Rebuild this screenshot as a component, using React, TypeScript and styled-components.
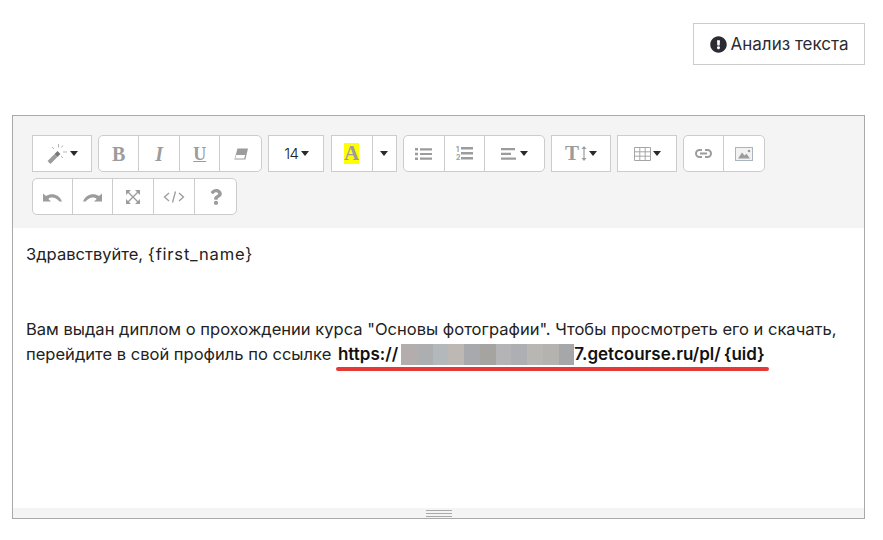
import { ReactNode } from 'react'
import { FaExclamationCircle, FaQuestion } from 'react-icons/fa'
import styled, { createGlobalStyle } from 'styled-components'

const GlobalStyle = createGlobalStyle`
  html, body {
    margin: 0;
    background: #fff;
    font-family: Inter, "Noto Sans", sans-serif;
    color: #222;
  }
`

const blurCells = ['#b3aeab', '#adaeb0', '#b3b8ba', '#bdb8b4', '#a8a9ac', '#a5a4a1', '#b4b4b6', '#aeafb2', '#b9b7b3', '#b5b3af', '#a6a7a8']

const Svg = ({ w, h, children }: { w: number; h: number; children: ReactNode }) => (
  <svg width={w} height={h} viewBox={`0 0 ${w} ${h}`} fill="#9c9c9c">
    {children}
  </svg>
)

const undoPath = 'M0 1.500V9.500H8L5.300 7C8 4.700 12.500 5 16.500 9.500H19C16 2.500 9 .5 3 4z'

const App = () => (
  <Page>
    <GlobalStyle />
    <TopBar>
      <AnalyzeButton>
        <FaExclamationCircle size={17} color="#2b2b33" />
        Анализ текста
      </AnalyzeButton>
    </TopBar>
    <Editor>
      <Toolbar>
        <Single $w={60}>
          <svg width="21" height="20" viewBox="0 0 21 20" fill="none" stroke="#9c9c9c">
            <path d="M2 18.500L9 11.500" strokeWidth="4" />
            <path d="M9 11.500L12 8.500" strokeWidth="4" stroke="#777" />
            <path d="M5 3l2 2M11.500 0v3.500M16 1.500l-1.500 2M16 8h4M14 12l2 2" strokeWidth="1" stroke="#b5b5b5" />
          </svg>
          <Caret />
        </Single>
        <Group>
          <ToolBtn $w={41}><SerifIcon $size={20} $bold>B</SerifIcon></ToolBtn>
          <ToolBtn $w={41}><SerifIcon $size={20} $bold $italic>I</SerifIcon></ToolBtn>
          <ToolBtn $w={40}><SerifIcon $size={18} $bold $underline>U</SerifIcon></ToolBtn>
          <ToolBtn $w={42}>
            <Svg w={14} h={12}>
              <path d="M3.500 .5h10.500l-2.600 11h-11z" />
              <path d="M2.200 7h9l-1 3.600h-9z" fill="#fff" />
            </Svg>
          </ToolBtn>
        </Group>
        <Single $w={56}>
          <SizeLabel>14</SizeLabel>
          <Caret />
        </Single>
        <Square>
          <ToolBtn $w={42}><ColorIcon>A</ColorIcon></ToolBtn>
          <ToolBtn $w={24}><Caret /></ToolBtn>
        </Square>
        <Group>
          <ToolBtn $w={42}>
            <Svg w={17} h={12}>
              <path d="M0 0h3v2.600H0zM0 4.700h3v2.600H0zM0 9.400h3V12H0zM5 .2h12v2.200H5zM5 4.900h12v2.200H5zM5 9.600h12v2.200H5z" />
            </Svg>
          </ToolBtn>
          <ToolBtn $w={40}>
            <Svg w={17} h={16}>
              <path d="M5 1h12v2.400H5zM5 6h12v2.400H5zM5 11h12v2.400H5z" />
              <OrderNumber x="0" y="6">1</OrderNumber>
              <OrderNumber x="0" y="14">2</OrderNumber>
            </Svg>
          </ToolBtn>
          <ToolBtn $w={60}>
            <Svg w={15} h={12}>
              <path d="M0 0h14v2.200H0zM0 4.800h10v2.200H0zM0 9.600h15v2.200H0z" />
            </Svg>
            <Caret />
          </ToolBtn>
        </Group>
        <Single $w={60}>
          <SerifIcon $size={21} $bold>T</SerifIcon>
          <Svg w={6} h={15}>
            <path d="M3 0l2.500 3H3.600v9h1.900L3 15 .5 12h1.900V3H.5z" />
          </Svg>
          <Caret />
        </Single>
        <Single $w={60}>
          <svg width="17" height="14" viewBox="0 0 17 14" fill="none" stroke="#a5a5a5">
            <path d="M.5.500h16v13H.5zM.5 4.800h16M.5 9.200h16M5.800.500v13M11.200.500v13" />
          </svg>
          <Caret />
        </Single>
        <Group>
          <ToolBtn $w={41}>
            <svg width="17" height="9" viewBox="0 0 17 9" fill="none" stroke="#9c9c9c" strokeWidth="2">
              <path d="M7 1H4.500a3.500 3.500 0 0 0 0 7H7M10 1h2.500a3.500 3.500 0 0 1 0 7H10M5 4.500h7" />
            </svg>
          </ToolBtn>
          <ToolBtn $w={41}>
            <svg width="18" height="14" viewBox="0 0 18 14" fill="none">
              <rect x=".5" y=".5" width="17" height="13" stroke="#a9b4c0" fill="#f2f2f2" />
              <path d="M3 11.500l4-6 2.500 3 2-1.800 3.500 4.800z" fill="#9c9c9c" />
              <circle cx="14" cy="4" r="1.300" fill="#9c9c9c" />
            </svg>
          </ToolBtn>
        </Group>
        <Group>
          <ToolBtn $w={41}>
            <Svg w={19} h={10}><path d={undoPath} /></Svg>
          </ToolBtn>
          <ToolBtn $w={40}>
            <Svg w={19} h={10}><path d={undoPath} transform="matrix(-1 0 0 1 19 0)" /></Svg>
          </ToolBtn>
          <ToolBtn $w={41}>
            <svg width="14" height="14" viewBox="0 0 14 14" fill="#9c9c9c" stroke="none">
              <path d="M0 0h5L0 5zM14 0v5L9 0zM0 14V9l5 5zM14 14H9l5-5z" />
              <path d="M2 2l10 10M12 2L2 12" stroke="#9c9c9c" strokeWidth="1.400" />
            </svg>
          </ToolBtn>
          <ToolBtn $w={41}>
            <svg width="22" height="12" viewBox="0 0 22 12" fill="none" stroke="#9c9c9c" strokeWidth="1.300">
              <path d="M6 2L1.500 6 6 10M16 2l4.500 4L16 10M12.500 .5L9.500 11.500" />
            </svg>
          </ToolBtn>
          <ToolBtn $w={42}><FaQuestion size={16} color="#9c9c9c" /></ToolBtn>
        </Group>
      </Toolbar>
      <Content>
        <Paragraph>Здравствуйте, <Wide>{'{first_name}'}</Wide></Paragraph>
        <Spacer />
        <Paragraph>
          Вам выдан диплом о прохождении курса "Основы фотографии". Чтобы просмотреть его и скачать,
          перейдите в свой профиль по ссылке{' '}
          <LinkText>
            https://
            <Blurred>
              {blurCells.map((color, i) => (
                <BlurCell key={i} $color={color} />
              ))}
            </Blurred>
            7.getcourse.ru/pl/<Brace>{'{uid}'}</Brace>
            <Underline />
          </LinkText>
        </Paragraph>
      </Content>
      <ResizeBar>
        <Grip />
      </ResizeBar>
    </Editor>
  </Page>
)

export default App

const Page = styled.div`
  padding: 23px 18px 0 12px;
`

const TopBar = styled.div`
  display: flex;
  justify-content: flex-end;
  margin-bottom: 50px;
`

const AnalyzeButton = styled.button`
  display: flex;
  align-items: center;
  justify-content: center;
  gap: 4px;
  width: 172px;
  height: 42px;
  padding: 0;
  border: 1px solid #ccc;
  background: #fff;
  font: 17px Inter, sans-serif;
  color: #2b2b33;
`

const Editor = styled.div`
  display: flex;
  flex-direction: column;
  box-sizing: border-box;
  height: 404px;
  border: 1px solid #a9a9a9;
  box-shadow: 0 1px 0 #d8d8d8;
`

const Toolbar = styled.div`
  display: flex;
  flex-wrap: wrap;
  gap: 6px 6.200px;
  height: 112px;
  box-sizing: border-box;
  padding: 19px 19px 0;
  align-content: flex-start;
  background: #f4f4f4;
`

const Group = styled.div`
  display: flex;
  height: 37px;
  box-sizing: border-box;
  border: 1px solid #ccc;
  border-radius: 5px;
  background: #fff;
  overflow: hidden;
`

const Square = styled(Group)`
  border-radius: 0;
`

const ToolBtn = styled.div<{ $w: number }>`
  display: flex;
  align-items: center;
  justify-content: center;
  gap: 4px;
  flex: 0 0 auto;
  box-sizing: border-box;
  width: ${(p) => p.$w}px;
  border-right: 1px solid #ccc;

  &:first-child {
    width: ${(p) => p.$w - 1}px;
  }

  &:last-child {
    border-right: 0;
    width: ${(p) => p.$w - 1}px;
  }
`

const Single = styled.div<{ $w: number }>`
  display: flex;
  align-items: center;
  justify-content: center;
  gap: 2px;
  box-sizing: border-box;
  width: ${(p) => p.$w}px;
  height: 37px;
  border: 1px solid #ccc;
  background: #fff;
`

const Caret = styled.span`
  display: inline-block;
  width: 0;
  height: 0;
  border-left: 4px solid transparent;
  border-right: 4px solid transparent;
  border-top: 5px solid #2a2a2a;
`

const SerifIcon = styled.span<{ $size: number; $bold?: boolean; $italic?: boolean; $underline?: boolean }>`
  font-family: "Liberation Serif", serif;
  font-size: ${(p) => p.$size}px;
  font-weight: ${(p) => (p.$bold ? 700 : 400)};
  font-style: ${(p) => (p.$italic ? 'italic' : 'normal')};
  text-decoration: ${(p) => (p.$underline ? 'underline' : 'none')};
  color: #9c9c9c;
  line-height: 1;
`

const OrderNumber = styled.text`
  font: 700 7px Inter, sans-serif;
  fill: #9c9c9c;
`

const ColorIcon = styled.span`
  display: block;
  width: 15px;
  height: 21px;
  background: #ffff00;
  font: 700 21px/21px "Liberation Serif", serif;
  text-align: center;
  color: #9c9c9c;
`

const SizeLabel = styled.span`
  font-size: 15px;
  font-weight: 300;
  letter-spacing: -0.5px;
  color: #222;
`

const Content = styled.div`
  flex: 1;
  padding: 14px 13px 0;
  background: #fff;
`

const Paragraph = styled.p`
  margin: 0;
  font-size: 16.550px;
  line-height: 25px;
  color: #222;
`

const Wide = styled.span`
  letter-spacing: 0.8px;
`

const Spacer = styled.div`
  height: 50px;
`

const LinkText = styled.strong`
  position: relative;
  margin-left: 2px;
  font-size: 17px;
  font-weight: 600;
  color: #111;
`

const Blurred = styled.span`
  display: inline-flex;
  height: 21px;
  margin-left: 3px;
  vertical-align: -5px;
`

const BlurCell = styled.span<{ $color: string }>`
  width: 15.750px;
  background: ${(p) => p.$color};
`

const Brace = styled.span`
  margin-left: 3px;
`

const Underline = styled.span`
  position: absolute;
  left: -2px;
  right: -4px;
  bottom: -7px;
  height: 4px;
  border-radius: 2px;
  background: #e53935;
`

const ResizeBar = styled.div`
  display: flex;
  align-items: center;
  justify-content: center;
  height: 10px;
  background: #f4f4f4;
`

const Grip = styled.div`
  width: 26px;
  height: 5px;
  border-top: 1px solid #a9a9a9;
  border-bottom: 1px solid #a9a9a9;
  background: linear-gradient(#a9a9a9, #a9a9a9) center / 100% 1px no-repeat;
`
